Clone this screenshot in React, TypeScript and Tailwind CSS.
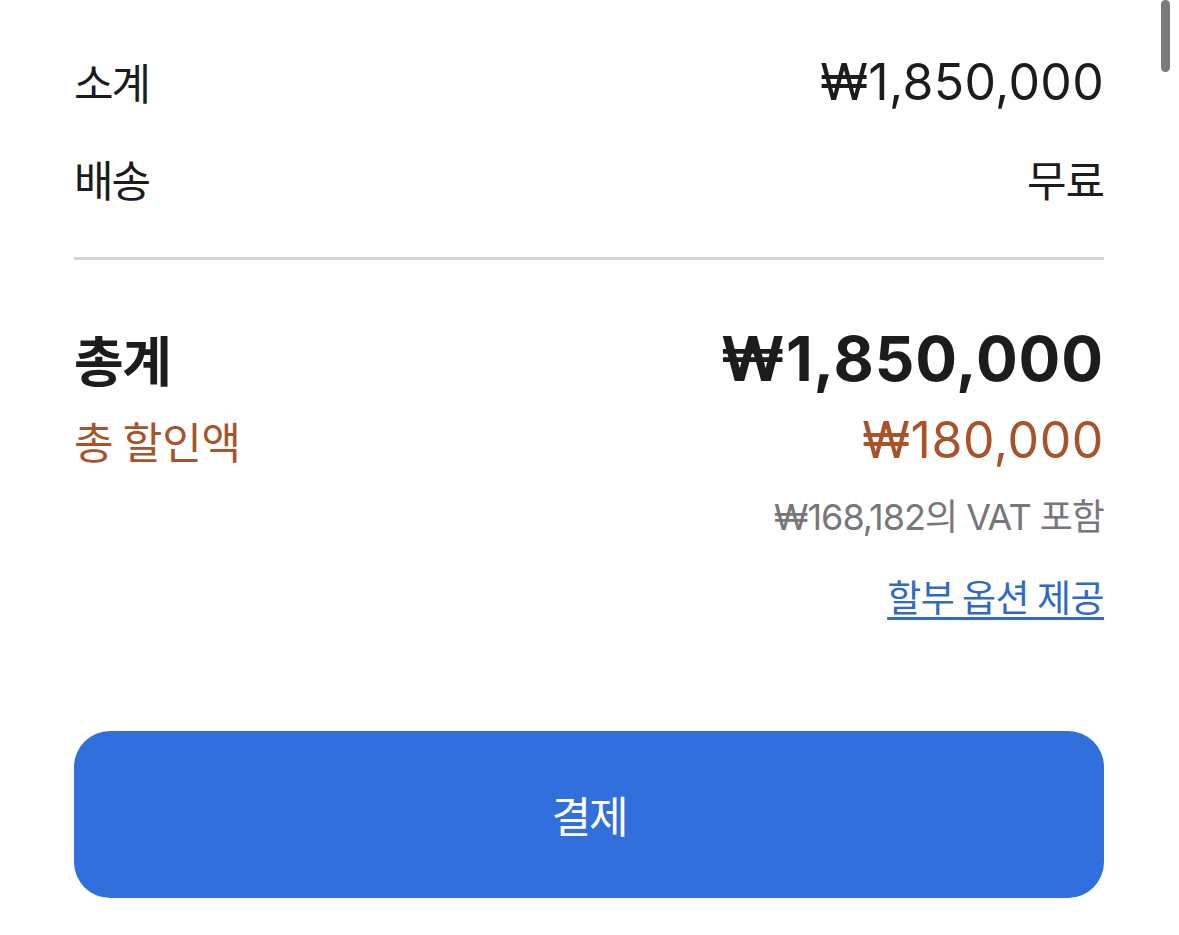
import React from "react";

const FONT = { fontFamily: 'Inter, "Noto Sans CJK KR", sans-serif' } as React.CSSProperties;

export default function App() {
  return (
    <div className="relative w-full h-[935px] bg-white overflow-hidden text-[#1c1c1e]" style={FONT}>
      <div className="absolute right-[9px] top-0 w-[9px] h-[72px] rounded-full bg-[#7b7b7b]" />
      <div className="pl-[74px] pr-[75px] pt-[33px]">
        <div className="flex h-[97px] items-center justify-between">
          <span className="text-[43px] leading-none font-['Noto_Sans_CJK_KR'] tracking-[-2px]">소계</span>
          <span className="text-[50px] leading-none tracking-[0.3px]">₩1,850,000</span>
        </div>
        <div className="flex h-[97px] items-center justify-between">
          <span className="text-[43px] leading-none font-['Noto_Sans_CJK_KR'] tracking-[-2px]">배송</span>
          <span className="text-[43px] leading-none font-['Noto_Sans_CJK_KR'] tracking-[-1px]">무료</span>
        </div>
        <div className="mt-[30px] h-[3px] bg-[#d5d5d7]" />
        <div className="mt-[64px] flex h-[70px] items-center justify-between">
          <span className="text-[54px] leading-none font-bold font-['Noto_Sans_CJK_KR'] tracking-[-1.5px]">총계</span>
          <span className="text-[62px] leading-none font-bold tracking-[0.9px]">₩1,850,000</span>
        </div>
        <div className="flex h-[92px] items-center justify-between text-[#a9532a]">
          <span className="text-[43px] leading-none font-['Noto_Sans_CJK_KR'] tracking-[-0.2px]">총 할인액</span>
          <span className="text-[50px] leading-none tracking-[0.6px]">₩180,000</span>
        </div>
        <div className="flex h-[62px] items-center justify-end text-[#77777b]">
          <span className="text-[36px] leading-none tracking-[-1px]">₩168,182의 VAT 포함</span>
        </div>
        <div className="flex h-[96px] items-center justify-end">
          <a className="text-[37px] leading-none text-[#2e6ac6] underline decoration-[3px] underline-offset-[5px] font-['Noto_Sans_CJK_KR'] tracking-[-0.5px]">
            할부 옵션 제공
          </a>
        </div>
        <button className="mt-[87px] flex h-[167px] w-full items-center justify-center rounded-[36px] bg-[#3170dc] text-white">
          <span className="text-[43px] leading-none font-['Noto_Sans_CJK_KR'] tracking-[-2px]">결제</span>
        </button>
      </div>
    </div>
  );
}
